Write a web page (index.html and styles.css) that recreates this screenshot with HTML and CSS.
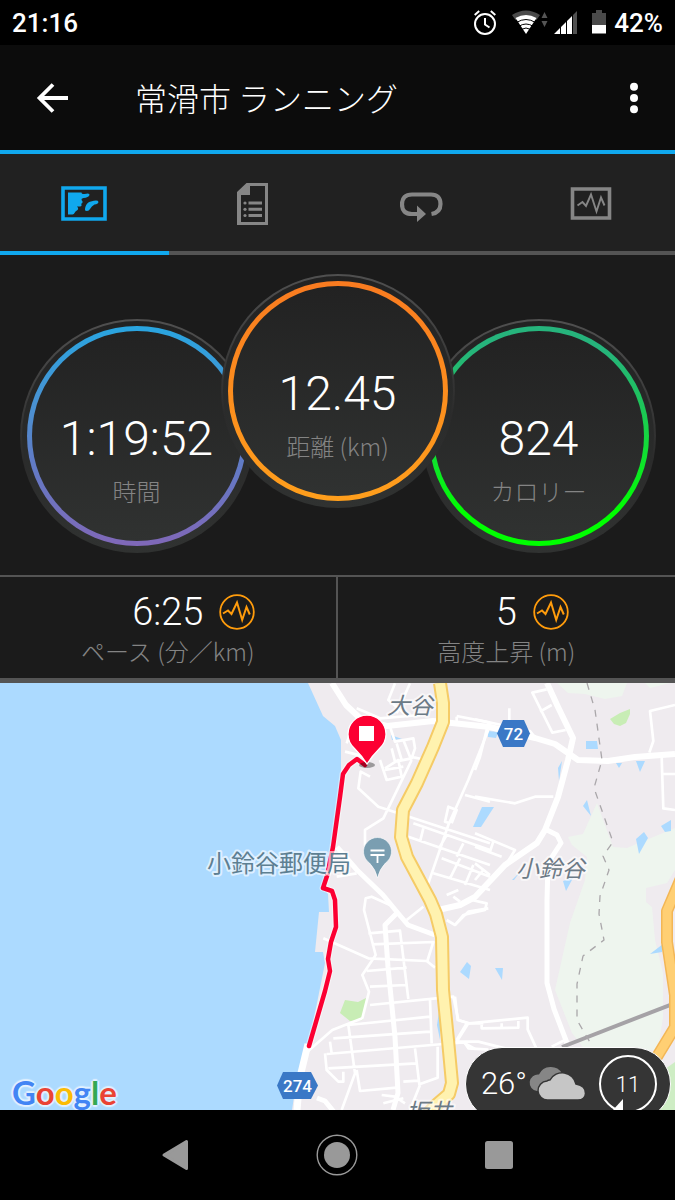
FILE: index.html
```html
<!DOCTYPE html>
<html lang="ja">
<head>
<meta charset="utf-8">
<meta name="viewport" content="width=device-width, initial-scale=1">
<title>常滑市 ランニング</title>
<link rel="stylesheet" href="styles.css">
</head>
<body>
<svg class="defs" aria-hidden="true">
  <symbol id="pulse" viewBox="0 0 36 36">
    <circle cx="18" cy="18" r="16.8" fill="none" stroke="#ff9c0c" stroke-width="1.8"/>
    <path d="M4 19.500l5-3 3.500 3.500 5.500-11.500 5.200 17.500 4.300-13 3.300 7.500" fill="none" stroke="#ff9c0c" stroke-width="2"/>
  </symbol>
</svg>

<div class="status">
  <span class="clock">21:16</span>
  <svg class="status-icons" width="135" height="26" viewBox="0 0 135 26" aria-hidden="true">
    <g fill="none" stroke="#fff" stroke-width="2"><circle cx="11" cy="14" r="10"/><path d="M11 8v6.500l4.500 3M.7 5l4.500-4M16.800 1l4.500 4"/></g>
    <path d="M38 5q14-9 28 0l-3.500 5q-10.500-6-21 0z" fill="#4a4a4a"/>
    <path d="M41.500 8q10.500-6 21 0L52 24z" fill="#fff"/>
    <path d="M42.500 12.500q9.500-6 19 0M44.500 16.500q7.500-5 15 0M47 19.500q5-3 10 0" fill="none" stroke="#000" stroke-width="1"/>
    <path d="M67.500 8l3-6 3 6zM67.500 11h6l-3 6z" fill="#555"/>
    <path d="M80 24l6-6v6zM87 24v-7l5-5v12zM93 24V11l5-5v18z" fill="#fff"/>
    <path d="M99 24V5l4-4v23z" fill="#505050"/>
    <path d="M122 0h6v3h4v12h-14V3h4z" fill="#4a4a4a"/><path d="M118 15h14v8.500h-14z" fill="#fff"/>
  </svg>
  <span class="battery">42%</span>
</div>

<header class="appbar">
  <button class="icon-btn" type="button" aria-label="戻る">
    <svg width="32" height="32" viewBox="0 0 32 32"><path d="M17 2.500L3.500 16 17 29.500M3 16H32" fill="none" stroke="#fff" stroke-width="3.800"/></svg>
  </button>
  <h1>常滑市 ランニング</h1>
  <button class="icon-btn" type="button" aria-label="メニュー">
    <svg width="32" height="32" viewBox="0 0 32 32" fill="#fff"><circle cx="16" cy="4.700" r="4"/><circle cx="16" cy="16" r="4"/><circle cx="16" cy="27.300" r="4"/></svg>
  </button>
</header>

<nav class="tabs">
  <button class="tab active" type="button" aria-label="マップ">
    <svg width="46" height="42" viewBox="0 0 46 42"><path d="M2 5h42v31H2z" fill="none" stroke="#10a8ee" stroke-width="3.600"/><path d="M7 9.500h13.500q0 2 3 1.500 5.500-1.500 5 1-1 2.500-6 3-2.500.5-2 2 1.500 1 1 2.500t-1.500 1q1.500 3-1 3h-3q2 2 .5 3.500l-2 1.500q-1.500 3-3 3H7zM24 27c0-5 3-8 6-8.500q7-2 7.500.500-.5 2-4 2.500-3 1.500-4.500 4.500-1 2-3 2t-2-1z" fill="#10a8ee"/></svg>
  </button>
  <button class="tab" type="button" aria-label="詳細">
    <svg width="32" height="42" viewBox="0 0 32 42"><path d="M9.500 0H31v42H0V9zM13 3v9H4v27h24V3z" fill="#868686" fill-rule="evenodd"/><path d="M11.500 18.500H25v3H11.500zm0 6.300H25v3H11.500zm0 6.200H25v3H11.500z" fill="#868686"/><g fill="#868686"><circle cx="8" cy="20" r="1.600"/><circle cx="8" cy="26.300" r="1.600"/><circle cx="8" cy="32.500" r="1.600"/></g></svg>
  </button>
  <button class="tab" type="button" aria-label="ラップ">
    <svg width="44" height="42" viewBox="0 0 44 42"><path d="M31.500 31q9-1.500 9-10 0-9.500-9.500-9.500H12q-10 0-10 9.800T12 31h6" fill="none" stroke="#868686" stroke-width="4.200"/><path d="M17 22.500l9 8.500-9 8z" fill="#868686"/></svg>
  </button>
  <button class="tab" type="button" aria-label="グラフ">
    <svg width="42" height="42" viewBox="0 0 42 42"><path d="M2.500 6h37v29h-37z" fill="none" stroke="#868686" stroke-width="3.600"/><path d="M7.500 22.500l5-3.500 3.500 4 5-11.500 5.500 17 4.500-14 3.500 8" fill="none" stroke="#868686" stroke-width="1.900"/></svg>
  </button>
</nav>

<main>
  <section class="dials">
    <div class="dial time"><div class="ring"><span class="value">1:19:52</span><span class="label">時間</span></div></div>
    <div class="dial distance"><div class="ring"><span class="value">12.45</span><span class="label">距離 (km)</span></div></div>
    <div class="dial calories"><div class="ring"><span class="value">824</span><span class="label">カロリー</span></div></div>
  </section>

  <section class="stats">
    <div class="stat">
      <div class="stat-row"><span class="stat-value">6:25</span><button class="chart-btn" type="button" aria-label="ペースのグラフ"><svg width="36" height="36"><use href="#pulse"/></svg></button></div>
      <div class="label">ペース (分／km)</div>
    </div>
    <div class="stat">
      <div class="stat-row"><span class="stat-value">5</span><button class="chart-btn" type="button" aria-label="高度のグラフ"><svg width="36" height="36"><use href="#pulse"/></svg></button></div>
      <div class="label">高度上昇 (m)</div>
    </div>
  </section>

  <section class="map">
    <svg class="map-art" viewBox="0 683 675 427" preserveAspectRatio="xMidYMid slice" role="img" aria-label="地図">
      <path d="M0 683h675v427H0z" fill="#efebef"/>
      <!-- sea -->
      <path d="M0 683h308l15 33 12 10 6 14v38l-7 70-11 40 5 6 1 18h-10l-4 40h8l2 11-16 80-12 34-5 33H0z" fill="#acdaff"/>
      <!-- woodland and parks -->
      <g fill="#eef5ee">
        <path d="M557 683h70l-5 13-17 3-20-5-17-1zM645 683h25l-20 5z"/>
        <path d="M597 803L613 847L627 848L675 828V870L667 883L646 888V902L652 907L655 940L663 973V1017L658 1050H585L572 1033L555 990L570 923L578 900L585 880L587 857L572 845L568 837L583 834Z"/>
      </g>
      <path d="M610 719l10-6 10-4v5l-4 9-6 3-6-2zM345 1000l13 2 10-5-5 23-13 1-10-8z" fill="#c8edb5"/>
      <path d="M675 1062l-20 14 4 34h16z" fill="#ceedc4"/>
      <!-- ponds -->
      <path d="M391 735l11 4-10 1zM482 807h12l-13 20h-8zM488 731l10 1-2 6-8-1zM586 741h11l1 8h-12zM636 761h9l-5 11zM616 763h6l-3 5zM562 761l-3 20-1-13zM587 800l4 16-8-10zM661 826l10-6v11l-6 1zM636 839l8-7 4 6-9 16zM563 881l10-3-7 13zM512 880l8-8-6 8zM467 962l4 4-2 13-9-7zM495 968h8l-1 12zM663 944l-13 10 12-2zM440 1005v35l-3-15z" fill="#acdaff"/>
      <!-- minor roads, north west -->
      <g transform="translate(290 680) scale(.33333)" class="minor">
        <path d="M200 85l70 30 120-10M315 10l-20 50 60 50M360 10l-40 90M170 190l10-30M165 215l60 15M240 290l-28-15-7 50 60 55 60 20 275 90M365 240l-85 175-55 35v45l30 45M270 240l20 60 45-10-10-50-40 25M300 140l15 45 55-10 5 30-10 30-50 10-10-40M320 190l15 50M340 180l20 50 50 10M285 270l55-10M595 150l-60 150-60 135-60 175M525 345l75 20M500 110v15M500 108l100 20M480 430l-15-5 10-45 25 10-15 40M370 430l230 80M355 470l245 85M400 445l-10 40M470 465l-20 35M520 490l-20 40M430 580l170 50M455 535l145 55M510 535l-30 60M550 555l-25 60M140 590l60-10"/>
      </g>
      <!-- minor roads, north east -->
      <g transform="translate(475 680) scale(.33333)" class="minor">
        <path d="M0 118l165 35 20 25M103 85v45M215 28l-43 10 60 120 40-8M195 95l35-20M40 130L15 230 0 270M0 350l120 20 60-20h55M600 75l-75 18 10 90-12 35M560 230l5 155 35 5M565 282h35M0 460l120 50-25 40M0 500l80 30M55 485l-10 30M0 550l45 35M0 600l25-30"/>
      </g>
      <!-- minor roads, south west -->
      <g transform="translate(280 890) scale(.33333)" class="minor">
        <path d="M130 145l135 60 175 8 25 20M330 45l-55-25-18 5-5 35 35 135-40 60 20 50-20 80-90 35-75 65-15 45M265 130l95-8 25 205M275 163l185-7-18 57M260 243l120-10M270 290l110-5M270 345l250-25 15 70 30 10 45 0M205 405l245-25M160 445l290-20M140 492l350-30 60-5 35 20M150 455l5 35M205 405l20 145-40 110M230 540l10 63 110-10M135 490l5 50 35 35h15v-30M145 535l265-15M405 475l13 108 55-20V470M370 575l45-3M450 330l5 130M305 615l40 5 30 20M310 640l60-15M390 660l30-75M380 90l50-40M500 90l25 15 40-40 60-10M500 15l35-15M520 20l20 15M530 450l30-50"/>
      </g>
      <!-- minor roads, south centre -->
      <g transform="translate(455 890) scale(.33333)" class="minor">
        <path d="M50 30l45 10-5 20-65 15-25 30M0 320l8 70 35 10 175-17v35l25 55M80 405v10l110-2v-20M140 400v15M40 400L5 455l65 0 80 20M30 460l10 15 60 4M290 470l40-20"/>
      </g>
      <!-- main local roads -->
      <g fill="none" stroke="#fff" stroke-width="6" stroke-linejoin="round">
        <path d="M332 683l14 22 16 15 25 6 46-5 57 6 45 11 20 6 23 16 30 1 27-4 40-3"/>
        <path d="M547 683l11 24 15 31-5 22-10 37-13 33-8 13-32 22-30 32-15 8-22 5"/>
        <path d="M337 847l20 23 26 25 14 17 11 13 27 10" stroke-width="5"/>
        <path d="M547 830l10 5 4 8-13 20-1 37v83l7 26 13 34M397 913l-12 12 3 42 7 70 3 56-5 17" stroke-width="5"/>
        <path d="M308 1044l-8 33-3 33" stroke-width="7"/><path d="M317 1098l8 3 9 11" stroke-width="5"/>
        <path d="M343 777l-12 93" stroke-width="3"/>
      </g>
      <!-- railway, boundary -->
      <path d="M562 1047l113-44" stroke="#a5a2a6" stroke-width="4"/>
      <path d="M587 683l8 27 7 50-8 28 19 54-10 14 6 14-9 26-1 18 5 26-21 16-6 28v36l14 24" fill="none" stroke="#aaa7aa" stroke-width="1.300" stroke-dasharray="7 7"/>
      <!-- highways -->
      <g fill="none" stroke-linejoin="round">
        <path d="M440 683l3 20v19l-10 25-16 36-14 27-2 27 6 20 23 43 6 14 6 23 1 53 5 50 4 43-3 11-14 12-8 9" stroke="#f5cb66" stroke-width="14"/>
        <path d="M440 683l3 20v19l-10 25-16 36-14 27-2 27 6 20 23 43 6 14 6 23 1 53 5 50 4 43-3 11-14 12-8 9" stroke="#fff2af" stroke-width="10"/>
        <path d="M682 876l-15 35v31l8 53v32l-20 33" stroke="#f3b655" stroke-width="12"/>
        <path d="M682 876l-15 35v31l8 53v32l-20 33" stroke="#ffcf73" stroke-width="9"/>
      </g>
      <!-- labels -->
      <g class="place">
        <text x="387" y="714" class="slant">大谷</text>
        <text x="516" y="877" class="slant">小鈴谷</text>
        <text x="406" y="1120" class="slant">坂井</text>
      </g>
      <!-- track -->
      <path d="M365 765l-8-6-8 6-6 9-3 23-7 50-6 29-4 12 9 3 3 9 1 27-5 15-3 17 2 12-5 20-16 55" fill="none" stroke="#fff" stroke-width="7" stroke-linejoin="round" opacity=".45"/>
      <path d="M365 765l-8-6-8 6-6 9-3 23-7 50-6 29-4 12 9 3 3 9 1 27-5 15-3 17 2 12-5 20-16 55" fill="none" stroke="#fc0032" stroke-width="4.500" stroke-linejoin="round" stroke-linecap="round"/>
      <g class="place"><text x="207" y="872" class="office">小鈴谷郵便局</text></g>
      <!-- post office pin -->
      <path d="M377.500 878q-2-9-8-15a14 14 0 1 1 16 0q-6 6-8 15z" fill="#7a9eb1" stroke="#fff" stroke-width=".6"/>
      <path d="M370.500 850.500h14M370.500 855h14M377.500 855v8" stroke="#fff" stroke-width="1.800"/>
      <!-- finish pin -->
      <ellipse cx="367" cy="765" rx="8" ry="3" fill="#000" opacity=".35"/>
      <path d="M367 764q-5-8-13-16a19 19 0 1 1 26 0q-8 8-13 16z" fill="#fc0032" stroke="#fff" stroke-width="1.300"/>
      <path d="M359 726h15v15h-15z" fill="#fff"/>
      <!-- route shields -->
      <g class="shield">
        <path d="M503 720h21l6 13.500-6 13.500h-21l-6-13.500z"/><text x="513.500" y="740">72</text>
        <path d="M283 1072h28l7 13.500-7 13.500h-28l-6-13.500z"/><text x="297.500" y="1092">274</text>
      </g>
    </svg>
    <a class="google" href="#" aria-label="Google"><span class="b">G</span><span class="r">o</span><span class="y">o</span><span class="b">g</span><span class="g">l</span><span class="r">e</span></a>
    <div class="weather">
      <span class="temp">26°</span>
      <svg width="62" height="36" viewBox="0 0 60 36" aria-hidden="true">
        <path d="M9 25a8 8 0 0 1 2-16.500 13 13 0 0 1 23-1l-12 18z" fill="#868686"/>
        <path d="M20 34a9.500 9.500 0 0 1-1-19 4 4 0 0 1 3-1 14 14 0 0 1 26 4q10 2 9.500 9.500-.5 6.500-7.500 6.500z" fill="#c6c6c6" stroke="#353535" stroke-width="1.500"/>
      </svg>
      <div class="wind">11
        <svg class="needle" width="14" height="20" viewBox="0 0 14 20" aria-hidden="true"><path d="M10 0v16L0 11z" fill="#fff"/></svg>
      </div>
    </div>
  </section>
</main>

<footer class="sysnav">
  <button type="button" aria-label="戻る"><svg width="42" height="42" viewBox="0 0 42 42"><path d="M9 21l22.500-13.500v27z" fill="#999" stroke="#999" stroke-width="3" stroke-linejoin="round"/></svg></button>
  <button type="button" aria-label="ホーム"><svg width="42" height="42" viewBox="0 0 42 42"><circle cx="21" cy="21" r="19.800" fill="none" stroke="#999" stroke-width="1.400"/><circle cx="21" cy="21" r="13" fill="#999"/></svg></button>
  <button type="button" aria-label="履歴"><svg width="42" height="42" viewBox="0 0 42 42"><rect x="7" y="7" width="28" height="28" rx="2.500" fill="#999"/></svg></button>
</footer>
</body>
</html>
```
FILE: styles.css
```css
* { box-sizing: border-box; }

body {
  margin: 0;
  min-height: 100vh;
  display: flex;
  flex-direction: column;
  background: #000;
  color: #fff;
  font-family: Roboto, "Noto Sans CJK JP", sans-serif;
  font-weight: 300;
}

button {
  border: 0;
  padding: 0;
  background: none;
  color: inherit;
  font: inherit;
  cursor: pointer;
}

svg { display: block; }

.defs { position: absolute; width: 0; height: 0; }

.status {
  height: 45px;
  padding: 0 12px;
  display: flex;
  align-items: center;
  font-size: 26px;
  font-weight: 500;
}

.clock { flex: 1; }
.status-icons { margin-right: 5px; }

.appbar {
  height: 109px;
  padding: 0 25px 0 36px;
  display: flex;
  align-items: center;
  background: #0c0c0c;
  border-bottom: 4px solid #10a8ee;
}

.appbar h1 {
  flex: 1;
  margin: 0 0 0 67px;
  padding-bottom: 2px;
  font-family: "Noto Sans CJK JP", sans-serif;
  font-size: 32px;
  font-weight: 300;
  line-height: 48px;
}

.tabs {
  display: grid;
  grid-template-columns: repeat(4, 1fr);
  background: #212121;
}

.tab {
  height: 101px;
  padding-top: 3px;
  display: grid;
  place-items: center;
  border-bottom: 4px solid #545454;
}

.tab.active { border-color: #10a8ee; }

main {
  flex: 1;
  display: flex;
  flex-direction: column;
  background: #1b1b1b;
}

.dials {
  display: flex;
  justify-content: center;
  padding: 19px 0 22px;
}

.dial {
  width: 234px;
  height: 234px;
  margin-top: 45px;
  padding: 5px;
  border: 2px solid transparent;
  border-radius: 50%;
  background:
    linear-gradient(#222, #303231) padding-box,
    linear-gradient(#505050, #2b2b2b 60%, #303231) border-box;
}

.distance {
  z-index: 1;
  margin: 0 -33px 45px;
}

.ring {
  height: 100%;
  padding-top: 80px;
  display: flex;
  flex-direction: column;
  align-items: center;
  gap: 6px;
  border: 5px solid transparent;
  border-radius: 50%;
}

.time .ring {
  background: linear-gradient(#222, #303231) padding-box, linear-gradient(#29a5e0, #4d8fd0 40%, #5f7cc6 60%, #8068b8) border-box;
}

.distance .ring {
  background: linear-gradient(#222, #303231) padding-box, linear-gradient(#f97b20, #ff9f1c) border-box;
}

.calories .ring {
  background: linear-gradient(#222, #303231) padding-box, linear-gradient(#26b47c 10%, #1ec45c 35%, #00ff00 85%) border-box;
}

.value {
  font-size: 48px;
  line-height: 56px;
}

.label {
  color: #848484;
  font-family: "Noto Sans CJK JP", sans-serif;
  font-size: 24px;
  font-weight: 200;
  line-height: 36px;
  white-space: nowrap;
}

.stats {
  display: grid;
  grid-template-columns: 1fr 1fr;
  border-top: 2px solid #545454;
  border-bottom: 5px solid #545454;
}

.stat {
  padding: 12px 0 11px;
  text-align: center;
}

.stat:first-child { border-right: 2px solid #545454; }

.stat .label { line-height: 32px; }

.stat-row {
  display: grid;
  grid-template-columns: 1fr auto 1fr;
  gap: 16px;
  align-items: center;
}

.stat-value {
  grid-column: 2;
  font-size: 38px;
  line-height: 46px;
}

.chart-btn { justify-self: start; }

.map {
  position: relative;
  flex: 1;
  min-height: 427px;
  overflow: hidden;
  background: #acdaff;
}

.map-art {
  position: absolute;
  inset: 0;
  width: 100%;
  height: 100%;
}

.minor {
  fill: none;
  stroke: #fff;
  stroke-width: 8;
  stroke-linejoin: round;
}

.place {
  fill: #6c7a86;
  stroke: #fff;
  stroke-width: 4px;
  stroke-linejoin: round;
  stroke-opacity: .6;
  paint-order: stroke;
  font-family: "Noto Sans CJK JP", sans-serif;
  font-size: 23px;
  font-weight: 400;
}

.slant { font-style: italic; }

.office {
  fill: #5d7f92;
  font-size: 24px;
}

.shield {
  fill: #3a78c6;
}

.shield text {
  fill: #fff;
  font-size: 17px;
  font-weight: 500;
  text-anchor: middle;
}

.google {
  position: absolute;
  left: 12px;
  bottom: 0;
  font-family: Lato, sans-serif;
  font-size: 33px;
  font-weight: 700;
  line-height: 36px;
  text-decoration: none;
  text-shadow: 0 0 3px #e8f4ff, 2px 0 1px #e0f0ff, -2px 0 1px #e0f0ff, 0 2px 1px #e0f0ff, 0 -2px 1px #e0f0ff;
}

.google .b { color: #4285f4; }
.google .r { color: #ea4335; }
.google .y { color: #fbbc05; }
.google .g { color: #34a853; }

.weather {
  position: absolute;
  right: 4px;
  bottom: -11px;
  height: 74px;
  padding: 0 13px 0 15px;
  display: flex;
  align-items: center;
  border: 1px solid #fff;
  border-radius: 37px;
  background: #353535;
}

.temp {
  font-size: 31px;
  line-height: 40px;
}

.wind {
  position: relative;
  width: 58px;
  height: 58px;
  margin-left: 10px;
  border: 2px solid #fff;
  border-radius: 50%;
  font-size: 22px;
  line-height: 56px;
  text-align: center;
}

.needle {
  position: absolute;
  left: 12px;
  bottom: -8px;
}

.sysnav {
  height: 90px;
  padding: 0 95px;
  display: grid;
  grid-template-columns: repeat(3, 1fr);
  place-items: center;
}
```
